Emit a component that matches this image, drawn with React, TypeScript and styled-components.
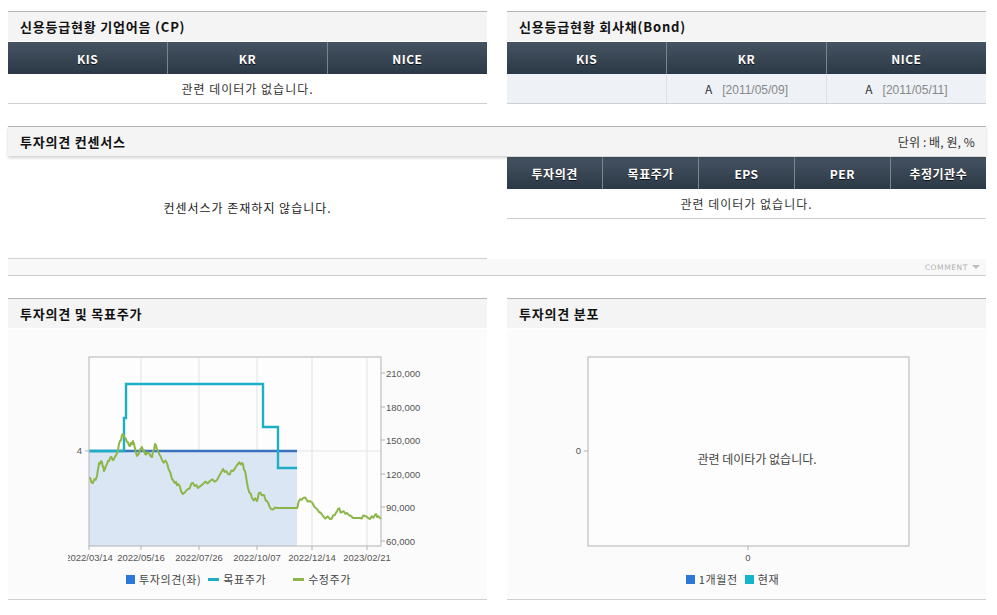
import React from 'react'
import styled, {createGlobalStyle} from 'styled-components'

const GlobalStyle = createGlobalStyle`
  html, body {
    margin: 0;
    padding: 0;
    background: #fff;
  }
  body {
    font-family: "Noto Sans CJK KR", "Noto Sans", sans-serif;
    font-size: 12px;
    color: #333;
  }
`

// green adjusted-price line, in page coordinates
const pricePts: [number, number][] = [
  [89, 477], [93, 482], [97, 475], [99, 462], [102, 461], [104, 470], [107, 463],
  [110, 457], [114, 458], [117, 452], [120, 440], [123, 433], [127, 441], [130, 445],
  [133, 440], [137, 455], [142, 446], [145, 453], [148, 452], [152, 456], [155, 443],
  [158, 450], [162, 459], [167, 462], [172, 478], [175, 482], [178, 483], [183, 493],
  [188, 488], [193, 482], [198, 487], [203, 483], [210, 480], [217, 479], [223, 468],
  [228, 473], [233, 470], [238, 463], [242, 462], [245, 470], [248, 487], [252, 497],
  [257, 500], [259, 492], [263, 494], [267, 500], [271, 508], [277, 507], [297, 507],
  [299, 500], [303, 497], [310, 500], [317, 508], [323, 515], [330, 518], [335, 514],
  [338, 508], [342, 511], [347, 512], [353, 517], [360, 517], [365, 515], [370, 518],
  [375, 514], [378, 515], [381, 518],
]

const jagged = (pts: [number, number][]) => {
  const out: string[] = []
  pts.forEach(([x, y], i) => {
    if (i > 0) {
      const [px, py] = pts[i - 1]
      if (py !== y) {
        for (let k = 1; k < 3; k++) {
          const t = k / 3
          const j = Math.sin(i * 7.3 + k * 3.1) * 1.6
          out.push(`${(px + (x - px) * t).toFixed(1)},${(py + (y - py) * t + j).toFixed(1)}`)
        }
      }
    }
    out.push(`${x},${y}`)
  })
  return 'M' + out.join(' L')
}

const priceTicks = [
  {y: 372, label: '210,000'},
  {y: 406, label: '180,000'},
  {y: 439, label: '150,000'},
  {y: 473, label: '120,000'},
  {y: 506, label: '90,000'},
  {y: 540, label: '60,000'},
]

const dateTicks = [
  {x: 89, label: '2022/03/14'},
  {x: 141, label: '2022/05/16'},
  {x: 199, label: '2022/07/26'},
  {x: 257, label: '2022/10/07'},
  {x: 312, label: '2022/12/14'},
  {x: 367, label: '2023/02/21'},
]

const OpinionChart = () => (
  <ChartSvg viewBox="8 328 479 240">
    <defs>
      <clipPath id="xclip">
        <rect x="68" y="540" width="400" height="30" />
      </clipPath>
    </defs>
    <rect x="89" y="356" width="292" height="189" fill="#fdfdfd" />
    {dateTicks.slice(1).map(t => (
      <line key={t.x} x1={t.x} y1="356" x2={t.x} y2="545" stroke="#e3e3e3" />
    ))}
    <line x1="89" y1="450" x2="381" y2="450" stroke="#e3e3e3" />
    <rect x="89" y="450" width="208" height="95" fill="#dbe6f5" />
    <line x1="89" y1="450" x2="297" y2="450" stroke="#3a72bd" strokeWidth="2.4" />
    <path
      d="M89,450 H124 V417 H126 V383 H263 V426 H278 V467 H297"
      fill="none"
      stroke="#1fafc4"
      strokeWidth="2.4"
    />
    <path d={jagged(pricePts)} fill="none" stroke="#8cb748" strokeWidth="2" strokeLinejoin="round" />
    <rect x="89" y="356" width="292" height="189" fill="none" stroke="#b3b3b3" />
    <line x1="85" y1="450" x2="89" y2="450" stroke="#b3b3b3" />
    <AxisText x="82" y="453" textAnchor="end">4</AxisText>
    {priceTicks.map(t => (
      <g key={t.y}>
        <line x1="381" y1={t.y} x2="385" y2={t.y} stroke="#b3b3b3" />
        <AxisText x="386" y={t.y + 3.5}>{t.label}</AxisText>
      </g>
    ))}
    <g clipPath="url(#xclip)">
      {dateTicks.map(t => (
        <g key={t.x}>
          <line x1={t.x} y1="545" x2={t.x} y2="549" stroke="#b3b3b3" />
          <AxisText x={t.x} y="560" textAnchor="middle">{t.label}</AxisText>
        </g>
      ))}
    </g>
  </ChartSvg>
)

const DistributionChart = () => (
  <ChartSvg viewBox="507 328 479 240">
    <rect x="588" y="356" width="321" height="189" fill="#fdfdfd" stroke="#b3b3b3" />
    <line x1="584" y1="450" x2="588" y2="450" stroke="#b3b3b3" />
    <AxisText x="581" y="453" textAnchor="end">0</AxisText>
    <line x1="748" y1="545" x2="748" y2="549" stroke="#b3b3b3" />
    <AxisText x="748" y="560" textAnchor="middle">0</AxisText>
    <EmptyText x="757" y="463" textAnchor="middle">관련 데이타가 없습니다.</EmptyText>
  </ChartSvg>
)

const App = () => {
  return (
    <>
      <GlobalStyle />
      <Page>
        <TwoCol>
          <section>
            <SectionHeader>
              <Title>신용등급현황 기업어음 (CP)</Title>
            </SectionHeader>
            <Table>
              <thead>
                <tr>
                  <Th>KIS</Th>
                  <Th>KR</Th>
                  <Th>NICE</Th>
                </tr>
              </thead>
              <tbody>
                <tr>
                  <Td colSpan={3}>관련 데이터가 없습니다.</Td>
                </tr>
              </tbody>
            </Table>
          </section>
          <section>
            <SectionHeader>
              <Title>신용등급현황 회사채(Bond)</Title>
            </SectionHeader>
            <Table>
              <thead>
                <tr>
                  <Th>KIS</Th>
                  <Th>KR</Th>
                  <Th>NICE</Th>
                </tr>
              </thead>
              <tbody>
                <tr>
                  <Td $tint />
                  <Td $tint>
                    A<DateText>[2011/05/09]</DateText>
                  </Td>
                  <Td $tint>
                    A<DateText>[2011/05/11]</DateText>
                  </Td>
                </tr>
              </tbody>
            </Table>
          </section>
        </TwoCol>

        <section>
          <SectionHeader $shadow>
            <Title>투자의견 컨센서스</Title>
            <Unit>단위 : 배, 원, %</Unit>
          </SectionHeader>
          <TwoCol>
            <MessageBox>컨센서스가 존재하지 않습니다.</MessageBox>
            <div>
              <Table>
                <thead>
                  <tr>
                    <Th>투자의견</Th>
                    <Th>목표주가</Th>
                    <Th>EPS</Th>
                    <Th>PER</Th>
                    <Th>추정기관수</Th>
                  </tr>
                </thead>
                <tbody>
                  <tr>
                    <Td colSpan={5}>관련 데이터가 없습니다.</Td>
                  </tr>
                </tbody>
              </Table>
            </div>
          </TwoCol>
          <CommentBar>COMMENT</CommentBar>
        </section>

        <TwoCol>
          <section>
            <SectionHeader>
              <Title>투자의견 및 목표주가</Title>
            </SectionHeader>
            <ChartBody>
              <OpinionChart />
              <Legend $shift={18}>
                <LegendItem>
                  <Swatch $color="#2b78d6" $kind="box" />
                  투자의견(좌)
                </LegendItem>
                <LegendItem $space={7}>
                  <Swatch $color="#1fafc4" $kind="line" />
                  목표주가
                </LegendItem>
                <LegendItem $space={27}>
                  <Swatch $color="#8cb748" $kind="line" />
                  수정주가
                </LegendItem>
              </Legend>
            </ChartBody>
          </section>
          <section>
            <SectionHeader>
              <Title>투자의견 분포</Title>
            </SectionHeader>
            <ChartBody>
              <DistributionChart />
              <Legend $shift={28}>
                <LegendItem>
                  <Swatch $color="#2b78d6" $kind="box" />
                  1개월전
                </LegendItem>
                <LegendItem $space={7}>
                  <Swatch $color="#14b5c9" $kind="box" />
                  현재
                </LegendItem>
              </Legend>
            </ChartBody>
          </section>
        </TwoCol>
      </Page>
    </>
  )
}

const Page = styled.div`
  width: 978px;
  padding: 11px 0 0 8px;
  display: flex;
  flex-direction: column;
  gap: 22px;
`
const TwoCol = styled.div`
  display: grid;
  grid-template-columns: 479px 479px;
  column-gap: 20px;
`
const SectionHeader = styled.div<{$shadow?: boolean}>`
  position: relative;
  z-index: 1;
  height: 29px;
  margin-bottom: 1px;
  border-top: 1px solid #b5b5b5;
  background: #f4f4f4;
  display: flex;
  align-items: center;
  justify-content: space-between;
  padding: 0 11px 0 12px;
  box-shadow: ${p => (p.$shadow ? '0 2px 3px rgba(0, 0, 0, 0.18)' : 'none')};
`
const Title = styled.h3`
  margin: 0;
  font-size: 13px;
  font-weight: bold;
  letter-spacing: 0.8px;
  color: #111;
  line-height: 1;
`
const Unit = styled.span`
  font-size: 12px;
  letter-spacing: 0.1px;
  color: #333;
  line-height: 1;
`
const Table = styled.table`
  width: 100%;
  table-layout: fixed;
  border-collapse: collapse;
`
const Th = styled.th`
  height: 32px;
  padding: 0;
  background: linear-gradient(#465362, #2b3846);
  color: #fff;
  font-size: 12px;
  font-weight: bold;
  letter-spacing: 0.5px;
  text-shadow: 0 1px 0 #111;
  border-left: 1px solid #7a8490;
  &:first-child {
    border-left: none;
  }
`
const Td = styled.td<{$tint?: boolean}>`
  height: 29px;
  padding: 0;
  text-align: center;
  font-size: 12px;
  letter-spacing: 1px;
  color: #333;
  background: ${p => (p.$tint ? '#eef1f6' : '#fff')};
  border-bottom: 1px solid #cfcfcf;
  border-left: ${p => (p.$tint ? '1px solid #dde1e7' : 'none')};
  &:first-child {
    border-left: none;
  }
`
const DateText = styled.span`
  margin-left: 9px;
  font-family: "Liberation Sans", sans-serif;
  letter-spacing: 0;
  color: #888;
`
const MessageBox = styled.div`
  height: 101px;
  border-bottom: 1px solid #cfcfcf;
  display: flex;
  align-items: center;
  justify-content: center;
  font-size: 12px;
  letter-spacing: 1px;
  color: #222;
`
const CommentBar = styled.div`
  height: 16px;
  background: #f8f8f8;
  border-bottom: 1px solid #cfcfcf;
  display: flex;
  align-items: center;
  justify-content: flex-end;
  padding-right: 6px;
  font-family: "DejaVu Sans", sans-serif;
  font-size: 7.5px;
  letter-spacing: 0.6px;
  color: #b2b2b2;
  &::after {
    content: '';
    margin-left: 4px;
    border-left: 4px solid transparent;
    border-right: 4px solid transparent;
    border-top: 4px solid #bdbdbd;
  }
`
const ChartBody = styled.div`
  height: 270px;
  background: #fbfbfb;
  border-bottom: 1px solid #cfcfcf;
  display: flex;
  flex-direction: column;
`
const ChartSvg = styled.svg`
  display: block;
  width: 479px;
  height: 240px;
`
const AxisText = styled.text`
  font-family: "Liberation Sans", Arial, sans-serif;
  font-size: 9.5px;
  fill: #555;
`
const EmptyText = styled.text`
  font-family: "Noto Sans CJK KR", sans-serif;
  font-size: 12px;
  fill: #444;
`
const Legend = styled.div<{$shift: number}>`
  height: 20px;
  display: flex;
  align-items: center;
  justify-content: center;
  padding-right: ${p => p.$shift}px;
  font-size: 11px;
  letter-spacing: 0.6px;
  color: #444;
`
const LegendItem = styled.span<{$space?: number}>`
  display: inline-flex;
  align-items: center;
  gap: 4px;
  margin-left: ${p => p.$space ?? 0}px;
`
const Swatch = styled.i<{$color: string; $kind: 'box' | 'line'}>`
  display: inline-block;
  width: ${p => (p.$kind === 'box' ? 9 : 11)}px;
  height: ${p => (p.$kind === 'box' ? 9 : 3)}px;
  background: ${p => p.$color};
`

export default App
